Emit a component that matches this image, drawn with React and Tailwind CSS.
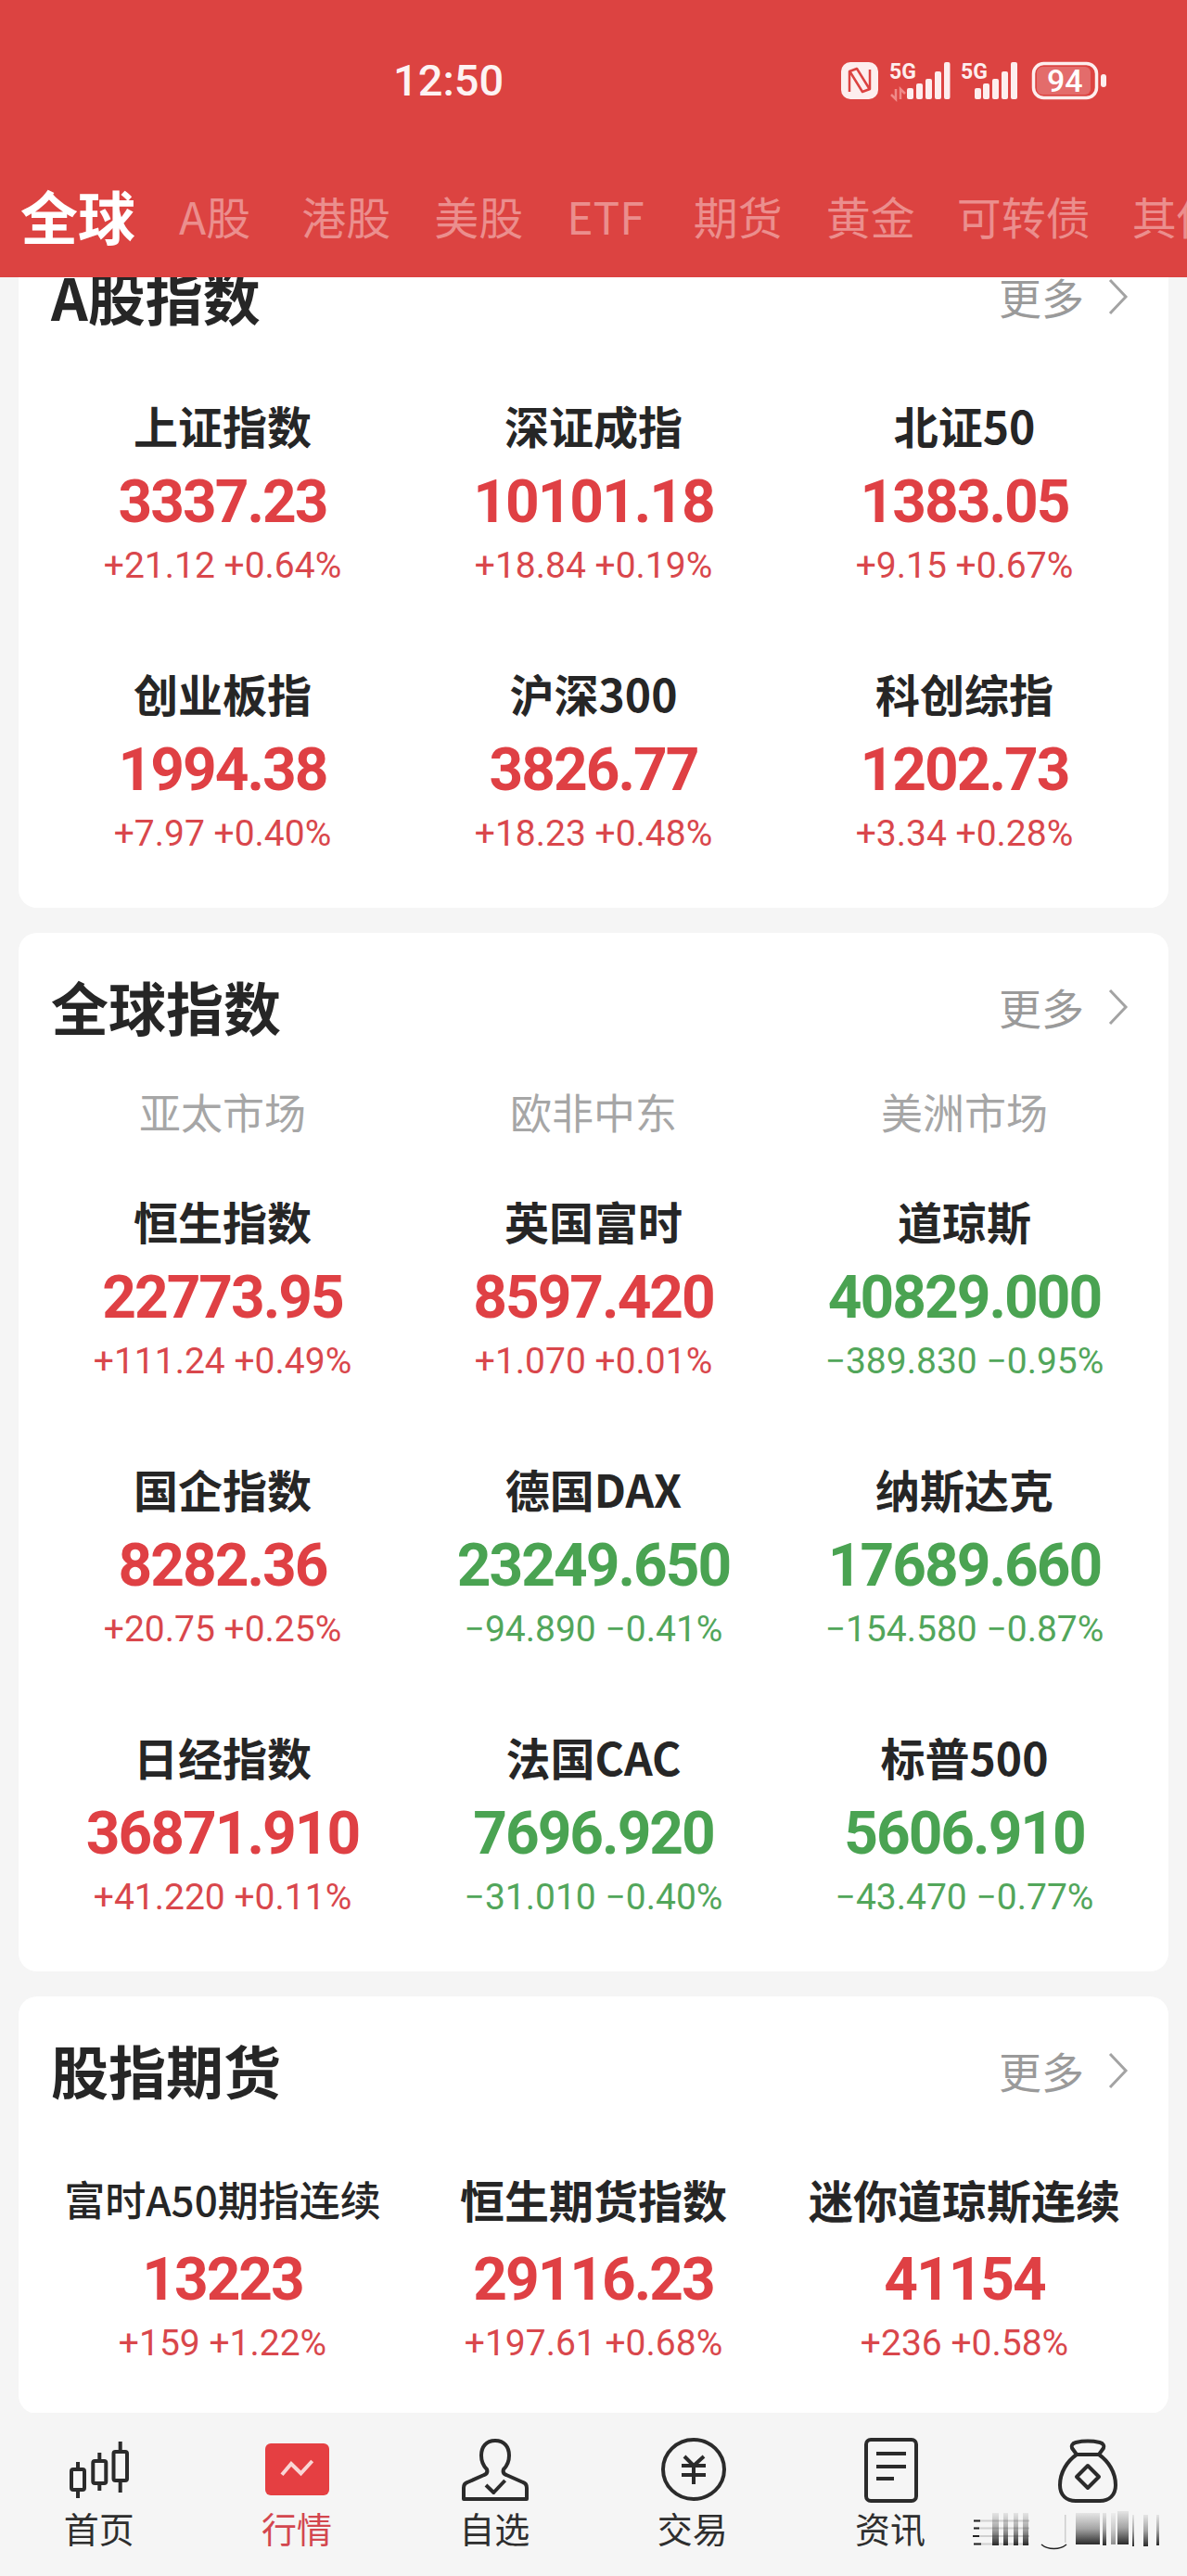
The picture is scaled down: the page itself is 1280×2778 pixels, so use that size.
const aShares = [
  { name: '上证指数', value: '3337.23', change: '+21.12 +0.64%', up: true },
  { name: '深证成指', value: '10101.18', change: '+18.84 +0.19%', up: true },
  { name: '北证50', value: '1383.05', change: '+9.15 +0.67%', up: true },
  { name: '创业板指', value: '1994.38', change: '+7.97 +0.40%', up: true },
  { name: '沪深300', value: '3826.77', change: '+18.23 +0.48%', up: true },
  { name: '科创综指', value: '1202.73', change: '+3.34 +0.28%', up: true },
];

const globalIndexes = [
  { name: '恒生指数', value: '22773.95', change: '+111.24 +0.49%', up: true },
  { name: '英国富时', value: '8597.420', change: '+1.070 +0.01%', up: true },
  { name: '道琼斯', value: '40829.000', change: '−389.830 −0.95%', up: false },
  { name: '国企指数', value: '8282.36', change: '+20.75 +0.25%', up: true },
  { name: '德国DAX', value: '23249.650', change: '−94.890 −0.41%', up: false },
  { name: '纳斯达克', value: '17689.660', change: '−154.580 −0.87%', up: false },
  { name: '日经指数', value: '36871.910', change: '+41.220 +0.11%', up: true },
  { name: '法国CAC', value: '7696.920', change: '−31.010 −0.40%', up: false },
  { name: '标普500', value: '5606.910', change: '−43.470 −0.77%', up: false },
];

const futures = [
  { name: '富时A50期指连续', value: '13223', change: '+159 +1.22%', up: true, small: true },
  { name: '恒生期货指数', value: '29116.23', change: '+197.61 +0.68%', up: true },
  { name: '迷你道琼斯连续', value: '41154', change: '+236 +0.58%', up: true },
];

const tabs = [
  { label: 'A股', className: 'mr-[8px]' },
  { label: '港股' },
  { label: '美股' },
  { label: 'ETF', className: 'mr-[6px]' },
  { label: '期货' },
  { label: '黄金', className: '-mr-[2px]' },
  { label: '可转债', className: '-mr-[2px]' },
  { label: '其他' },
];

const StatusIcons = () => (
  <svg width="290" height="54" viewBox="907 60 290 54" fill="none">
    <rect x="907" y="67" width="40" height="40" rx="10" fill="#fdeeee" />
    <path d="M916 99V77l8-3 13 21M938 75v21l-8 3-13-21" stroke="#dc4341" strokeWidth="2.5" strokeLinejoin="round" />
    <text x="959" y="85" fill="#fdeeee" fontFamily="Roboto, sans-serif" fontWeight="700" fontSize="23">5G</text>
    <path d="M966 96v11l-5-5M971 107V96l5 5" stroke="#f08a88" strokeWidth="2.5" />
    <rect x="978" y="95" width="7" height="12" rx="2" fill="#fdeeee" />
    <rect x="988" y="90" width="7" height="17" rx="2" fill="#fdeeee" />
    <rect x="998" y="85" width="7" height="22" rx="2" fill="#fdeeee" />
    <rect x="1008" y="77" width="7" height="30" rx="2" fill="#fdeeee" />
    <rect x="1018" y="67" width="6.5" height="40" rx="2" fill="#fdeeee" />
    <text x="1036" y="85" fill="#fdeeee" fontFamily="Roboto, sans-serif" fontWeight="700" fontSize="23">5G</text>
    <rect x="1051" y="95" width="7" height="12" rx="2" fill="#fdeeee" />
    <rect x="1060" y="90" width="7" height="17" rx="2" fill="#fdeeee" />
    <rect x="1070" y="85" width="7" height="22" rx="2" fill="#fdeeee" />
    <rect x="1080" y="77" width="7" height="30" rx="2" fill="#fdeeee" />
    <rect x="1090" y="67" width="7" height="40" rx="2" fill="#fdeeee" />
    <rect x="1118" y="72" width="58" height="30" rx="6" fill="#e36c6b" />
    <rect x="1114.5" y="68.5" width="68" height="37" rx="11" stroke="#fdeeee" strokeWidth="3.5" />
    <rect x="1187" y="80" width="6" height="14" rx="3" fill="#fdeeee" />
    <text x="1129" y="99" fill="#ffffff" fontFamily="Roboto, sans-serif" fontWeight="500" fontSize="34">94</text>
  </svg>
);

const CandleIcon = () => (
  <svg width="80" height="73" viewBox="0 0 80 73" fill="none" stroke="#2b2b2b" strokeWidth="4" strokeLinejoin="round">
    <path d="M17 27v8M17 57v9M40.3 17v9M40.3 50v8M62.7 5v11M62.7 47v13" />
    <rect x="10" y="35" width="14" height="22" rx="2" />
    <rect x="33.3" y="26" width="14" height="24" rx="2" />
    <rect x="55.5" y="16" width="14.5" height="31" rx="2" />
  </svg>
);

const MarketIcon = () => (
  <svg width="80" height="73" viewBox="0 0 80 73" fill="none">
    <rect x="6" y="7" width="69" height="56" rx="6" fill="#e53f42" />
    <path d="M24 40.7 34 29l10.5 10.3L56.7 26" stroke="#f9d5d4" strokeWidth="4" />
  </svg>
);

const WatchIcon = () => (
  <svg width="80" height="73" viewBox="0 0 80 73" fill="none" stroke="#2b2b2b" strokeWidth="4" strokeLinejoin="round">
    <path d="M41 4C31 4 26 11 26 20c0 7 3 12 6 15 1 3 0 5-3 6L11 49c-3 1-4 3-4 6v12h68V55c0-3-1-5-4-6L53 41c-3-1-4-3-3-6 3-3 6-8 6-15 0-9-5-16-15-16z" />
    <path d="M31 52l8.3 8L51.6 47" />
  </svg>
);

const TradeIcon = () => (
  <svg width="80" height="73" viewBox="0 0 80 73" fill="none" stroke="#2b2b2b" strokeWidth="4">
    <ellipse cx="41" cy="35" rx="33" ry="32" />
    <path d="M31 21l10 10 11-10M28 31h26M28 41h26M41 31v20" />
  </svg>
);

const NewsIcon = () => (
  <svg width="80" height="73" viewBox="0 0 80 73" fill="none" stroke="#2b2b2b" strokeWidth="4">
    <rect x="14" y="3" width="54" height="66" rx="5" />
    <path d="M25 18h32M25 32h32M25 45h19" />
  </svg>
);

const BagIcon = () => (
  <svg width="80" height="73" viewBox="0 0 80 73" fill="none" stroke="#2b2b2b" strokeWidth="4" strokeLinejoin="round">
    <path d="M27 6c9-2 17-2 26 0 4 1 5 4 4 6l-5 7H28l-5-7c-1-2 0-5 4-6z" />
    <path d="M28 19C18 26 10 38 10 52c0 11 7 17 17 17h26c10 0 17-6 17-17 0-14-8-26-18-33" />
    <path d="M40 31l12 12-12 12-12-12z" />
  </svg>
);

// the last tab label is smeared in the picture, so it is drawn rather than typed
const SmearedLabel = () => (
  <svg width="240" height="50" viewBox="0 3 240 50" className="max-w-none -translate-x-[23px]">
    <defs>
      <linearGradient id="smear" x1="0" y1="0" x2="0" y2="1">
        <stop offset="0" stopColor="#2b2b2b" stopOpacity="0.08" />
        <stop offset="0.5" stopColor="#2b2b2b" stopOpacity="0.4" />
        <stop offset="1" stopColor="#1f1f1f" stopOpacity="0.95" />
      </linearGradient>
    </defs>
    <rect x="40" y="12" width="7" height="35" fill="url(#smear)" />
    <rect x="52" y="12" width="5" height="35" fill="url(#smear)" />
    <rect x="63" y="12" width="5" height="35" fill="url(#smear)" />
    <rect x="73" y="12" width="6" height="35" fill="url(#smear)" />
    <path d="M20 20.5h60M20 28.5h60M20 37h60M20 45.5h60" stroke="#2b2b2b" strokeOpacity="0.18" strokeWidth="2" />
    <path d="M20 20.5h7M20 28.5h6M19 37h7M20 45.5h8" stroke="#222" strokeWidth="2" />
    <path d="M93 46c7 6 20 6 27 0" stroke="#222" strokeWidth="1.5" fill="none" />
    <rect x="118" y="14" width="1.5" height="30" fill="#2b2b2b" fillOpacity="0.2" />
    <rect x="130" y="12" width="26" height="34" fill="url(#smear)" />
    <rect x="159" y="12" width="4" height="35" fill="url(#smear)" />
    <rect x="168" y="12" width="5" height="34" fill="url(#smear)" fillOpacity="0.5" />
    <rect x="175" y="10" width="12" height="36" fill="url(#smear)" />
    <rect x="191" y="14" width="2" height="34" fill="url(#smear)" />
    <rect x="203" y="14" width="5" height="34" fill="url(#smear)" />
    <rect x="217" y="14" width="3" height="33" fill="url(#smear)" />
  </svg>
);

const navItems = [
  { label: '首页', icon: <CandleIcon /> },
  { label: '行情', icon: <MarketIcon />, active: true },
  { label: '自选', icon: <WatchIcon /> },
  { label: '交易', icon: <TradeIcon /> },
  { label: '资讯', icon: <NewsIcon /> },
  { icon: <BagIcon />, smeared: true },
];

const IndexCell = ({ item, loose }) => (
  <div className="flex flex-col items-center whitespace-nowrap">
    <div className={`h-[60px] leading-[54px] text-[#262626] ${item.small ? 'text-[44px] font-medium' : 'text-[48px] font-bold'}`}>
      {item.name}
    </div>
    <div className={`h-[100px] leading-[102px] font-['Roboto',sans-serif] text-[64px] font-bold tracking-[-2px] ${loose ? 'mt-[4px]' : ''} ${item.up ? 'text-[#df4044]' : 'text-[#4aa352]'}`}>
      {item.value}
    </div>
    <div className={`h-[38px] leading-[38px] font-['Roboto',sans-serif] text-[39px] ${item.up ? 'text-[#d9474c]' : 'text-[#52a65b]'}`}>
      {item.change}
    </div>
  </div>
);

const Card = ({ title, items, children, bodyClass = 'mt-[29px]', loose }) => (
  <section className={`mx-[20px] rounded-[20px] bg-white ${loose ? 'pb-[57px]' : 'pb-[61px]'}`}>
    <div className="flex h-[162px] items-center justify-between pb-[3px] pl-[35px] pr-[43px]">
      <h2 className="text-[62px] font-bold text-[#262626]">{title}</h2>
      <div className="flex items-center gap-[25px] text-[46px] text-[#9a9a9a]">
        <span>更多</span>
        <svg width="23" height="40" viewBox="0 0 23 40" fill="none" stroke="#a3a3a3" strokeWidth="3">
          <path d="M3 2l17 18L3 38" />
        </svg>
      </div>
    </div>
    {children}
    <div className={`grid grid-cols-3 gap-y-[91px] px-[20px] ${bodyClass}`}>
      {items.map((item) => (
        <IndexCell key={item.name} item={item} loose={loose} />
      ))}
    </div>
  </section>
);

export default function App() {
  return (
    <div className="flex h-[2778px] flex-col overflow-hidden bg-[#f5f5f5] font-['Noto_Sans_CJK_SC',sans-serif]">
      <header className="relative z-10 h-[299px] shrink-0 bg-[#dc4341]">
        <div className="flex h-[174px] items-center justify-between pl-[424px] pr-[83px]">
          <span className="font-['Roboto',sans-serif] text-[47px] font-medium text-[#fdf3f3]">12:50</span>
          <StatusIcons />
        </div>
        <nav className="flex h-[116px] items-center gap-[47px] overflow-hidden whitespace-nowrap pl-[22px]">
          <span className="text-[62px] font-bold text-white">全球</span>
          {tabs.map((tab) => (
            <span key={tab.label} className={`text-[48px] text-[#eb8e8d] ${tab.className || ''}`}>{tab.label}</span>
          ))}
        </nav>
      </header>

      <main className="-mt-[59px] flex min-h-0 flex-1 flex-col gap-[27px] overflow-hidden">
        <Card title="A股指数" items={aShares} />
        <Card title="全球指数" items={globalIndexes} bodyClass="mt-[67px]">
          <div className="mt-[14px] grid h-[40px] grid-cols-3 px-[20px] text-center text-[45px] leading-[34px] text-[#a6a6a6]">
            <span>亚太市场</span>
            <span>欧非中东</span>
            <span>美洲市场</span>
          </div>
        </Card>
        <Card title="股指期货" items={futures} loose />
      </main>

      <footer className="grid h-[176px] shrink-0 grid-cols-6 bg-[#f5f5f5] pt-[26px]">
        {navItems.map((item, i) => (
          <div key={i} className="flex flex-col items-center">
            {item.icon}
            {item.smeared ? (
              <SmearedLabel />
            ) : (
              <span className={`h-[50px] text-[38px] leading-[50px] ${item.active ? 'text-[#d3474f]' : 'text-[#2e2e2e]'}`}>
                {item.label}
              </span>
            )}
          </div>
        ))}
      </footer>
    </div>
  );
}
